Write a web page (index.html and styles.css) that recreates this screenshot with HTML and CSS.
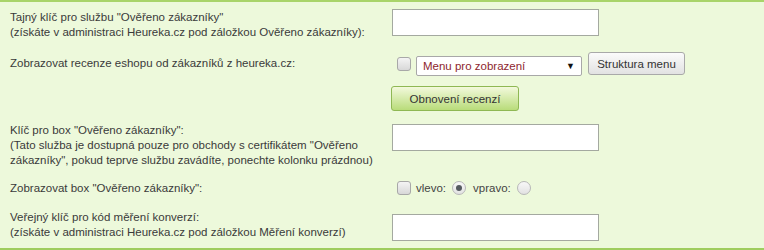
FILE: index.html
```html
<!DOCTYPE html>
<html lang="cs">
<head>
  <meta charset="UTF-8">
  <title>Heureka nastavení</title>
  <link rel="stylesheet" href="styles.css">
</head>
<body>
  <div class="panel">
    <!-- tajny klic -->
    <div class="row row-key">
      <div class="label">Tajný klíč pro službu "Ověřeno zákazníky"<br>(získáte v administraci Heureka.cz pod záložkou Ověřeno zákazníky):</div>
      <div class="field"><input type="text" class="text"></div>
    </div>
    <!-- recenze -->
    <div class="row row-reviews">
      <div class="label">Zobrazovat recenze eshopu od zákazníků z heureka.cz:</div>
      <div class="field inline">
        <span class="check"></span>
        <div class="select"><span>Menu pro zobrazení</span><span class="arrow">▼</span></div>
        <button class="btn">Struktura menu</button>
      </div>
    </div>
    <div class="row row-refresh">
      <div class="label"></div>
      <div class="field"><button class="btn btn-green">Obnovení recenzí</button></div>
    </div>
    <!-- box -->
    <div class="row row-box">
      <div class="label">Klíč pro box "Ověřeno zákazníky":<br>(Tato služba je dostupná pouze pro obchody s certifikátem "Ověřeno<br>zákazníky", pokud teprve službu zavádíte, ponechte kolonku prázdnou)</div>
      <div class="field"><input type="text" class="text"></div>
    </div>
    <div class="row row-show">
      <div class="label">Zobrazovat box "Ověřeno zákazníky":</div>
      <div class="field inline">
        <span class="check"></span>
        <span class="opt">vlevo:</span>
        <span class="radio checked"></span>
        <span class="opt">vpravo:</span>
        <span class="radio"></span>
      </div>
    </div>
    <!-- konverze -->
    <div class="row row-conv">
      <div class="label">Veřejný klíč pro kód měření konverzí:<br>(získáte v administraci Heureka.cz pod záložkou Měření konverzí)</div>
      <div class="field"><input type="text" class="text"></div>
    </div>
  </div>
</body>
</html>
```

FILE: styles.css
```css
body {
  margin: 0;
  background-color: #edf9db;
  font-family: "Liberation Sans", Arial, sans-serif;
  font-size: 11.5px;
  color: #3a3a3a;
}

.panel {
  border-top: 2px solid #a9d46a;
  border-bottom: 2px solid #9fcd5e;
  height: 250px;
  box-sizing: border-box;
}

.row {
  display: grid;
  grid-template-columns: 382px 1fr;
  box-sizing: border-box;
}

.label {
  padding-left: 10px;
  line-height: 15px;
  white-space: nowrap;
}

.field {
  padding-left: 10px;
}

.inline {
  display: flex;
  align-items: center;
}

.row-key { padding-top: 7px; height: 42px; }
.row-key .label { padding-top: 1px; }
.row-reviews { height: 37px; padding-top: 2px; align-items: center; }
.row-refresh { height: 38px; padding-top: 5px; }
.row-box { height: 54px; }
.row-box .field { padding-top: 5px; }
.row-box .label { padding-top: 4px; }
.row-show { height: 30px; align-items: center; }
.row-conv { padding-top: 7px; }
.row-conv .field { padding-top: 4px; }

input.text {
  width: 207px;
  height: 27px;
  box-sizing: border-box;
  border: 1px solid #a4a9a0;
  background: #fff;
  margin: 0;
}

.check {
  width: 12px;
  height: 12px;
  border: 1px solid #a8a8a8;
  border-radius: 3px;
  background: linear-gradient(#f4f4f4, #d8d8d8);
  margin: 0 5px 0 5px;
}

.radio {
  width: 12px;
  height: 12px;
  border: 1px solid #b8b8b8;
  border-radius: 50%;
  background: linear-gradient(#f8f8f8, #e2e2e2);
  margin: 0 7px 0 6px;
  position: relative;
}

.radio.checked::after {
  content: "";
  position: absolute;
  left: 3px;
  top: 3px;
  width: 6px;
  height: 6px;
  border-radius: 50%;
  background: #555a60;
}

.opt {
  color: #444;
}

.select {
  width: 166px;
  height: 20px;
  box-sizing: border-box;
  border: 1px solid #a8a8a8;
  border-radius: 2px;
  background: #fff;
  display: flex;
  align-items: center;
  justify-content: space-between;
  padding: 0 6px 0 6px;
  color: #8e1f2e;
  margin-top: 4px;
}

.arrow {
  color: #111;
  font-size: 9px;
}

.btn {
  font-family: inherit;
  font-size: 11.5px;
  color: #333;
  border: 1px solid #a9a9a9;
  border-radius: 3px;
  background: linear-gradient(#fbfbfb, #e2e2e2);
  width: 97px;
  height: 23px;
  padding: 0;
  margin-left: 6px;
  cursor: pointer;
}

.btn-green {
  margin-left: -1px;
  width: 128px;
  height: 25px;
  border-color: #8fb854;
  background: linear-gradient(#f2f9dc, #b9dc7a);
}
```
